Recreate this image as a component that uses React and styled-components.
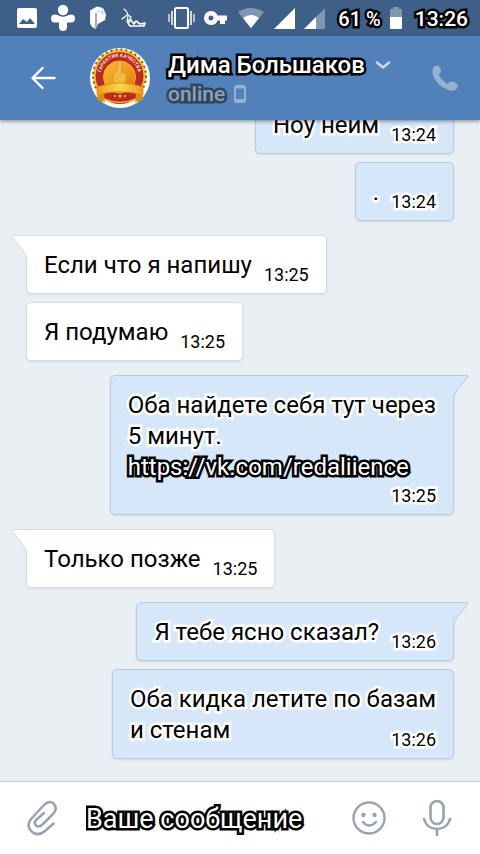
import React from "react";
import styled, { createGlobalStyle, css } from "styled-components";

const GlobalStyle = createGlobalStyle`
  * { box-sizing: border-box; }
  body { margin: 0; font-family: Roboto, "Noto Sans", sans-serif; }
  button { border: 0; padding: 0; background: none; font: inherit; cursor: pointer; }
  svg { display: block; flex: none; }
`;

const outline = css`
  paint-order: stroke fill;
  stroke-linejoin: round;
  -webkit-text-stroke: 5px ${(p) => p.$outline || "#000"};
`;

const Screen = styled.div`
  display: flex;
  flex-direction: column;
  height: 100vh;
  background: #eaeff3;
  overflow: hidden;
`;

const StatusBar = styled.div`
  display: flex;
  align-items: center;
  justify-content: space-between;
  height: 36px;
  flex: none;
  padding: 0 12px 0 17px;
  background: #3e5f87;
  color: #fff;
`;

const StatusGroup = styled.div`
  display: flex;
  align-items: center;
  gap: ${(p) => p.$gap}px;
`;

const StatusText = styled.span`
  ${outline}
  font-size: ${(p) => p.$size}px;
  font-weight: 500;
  line-height: 24px;
  padding-left: 4px;
  padding-top: 2px;
  white-space: nowrap;
`;

const Header = styled.header`
  position: relative;
  display: flex;
  align-items: center;
  height: 84px;
  flex: none;
  padding: 0 22px 0 30px;
  background: #5181b8;
  box-shadow: 0 1px 4px rgba(40, 55, 75, 0.6);
  z-index: 1;
`;

const Peer = styled.button`
  flex: 1;
  display: flex;
  align-items: center;
  gap: 18px;
  margin-left: 34px;
  text-align: left;
`;

const PeerInfo = styled.span`
  display: flex;
  flex-direction: column;
  padding-top: 2px;
`;

const PeerLine = styled.span`
  display: flex;
  align-items: center;
  gap: ${(p) => p.$gap}px;
`;

const PeerName = styled.span`
  ${outline}
  color: #fff;
  font-size: 24px;
  font-weight: 500;
  line-height: 30px;
  white-space: nowrap;
`;

const PeerStatus = styled.span`
  ${outline}
  color: #8fa1b6;
  font-size: 21px;
  font-weight: 500;
  line-height: 28px;
`;

const IconButton = styled.button`
  display: flex;
  align-items: center;
  justify-content: center;
  color: ${(p) => p.$color};
`;

const Messages = styled.main`
  flex: 1;
  min-height: 0;
  display: flex;
  flex-direction: column;
  justify-content: flex-end;
  gap: 8px;
  padding: 0 26px 22px;
  overflow: hidden;
`;

const Bubble = styled.article`
  position: relative;
  flex: none;
  align-self: ${(p) => (p.$out ? "flex-end" : "flex-start")};
  margin-top: ${(p) => (p.$first ? 6 : 0)}px;
  padding: 14px 17px 12px;
  color: #000;
  background: ${(p) => (p.$out ? "#d6e7f9" : "#fff")};
  border: 1px solid ${(p) => (p.$out ? "#b7cae4" : "#d5dbe2")};
  border-radius: 5px;
  box-shadow: 0 1px 2px rgba(60, 80, 110, 0.12);
`;

const tailSide = {
  in: css`left: -16px;`,
  out: css`right: -16px; transform: scaleX(-1);`,
};

const Tail = styled.svg`
  position: absolute;
  top: -1px;
  ${(p) => tailSide[p.$side]}
`;

const Line = styled.div`
  ${(p) => p.$out && outline}
  font-size: 24px;
  line-height: 31px;
  white-space: nowrap;
`;

const LastLine = styled.div`
  display: flex;
  justify-content: space-between;
  align-items: flex-end;
  gap: 12px;
`;

const MessageLink = styled.a`
  ${outline}
  color: #fff;
  text-decoration: none;
`;

const Time = styled.time`
  ${(p) => p.$out && outline}
  margin: 0 0 -6px auto;
  font-size: 18px;
  line-height: 25px;
`;

const Composer = styled.form`
  display: flex;
  align-items: center;
  height: 73px;
  flex: none;
  padding: 0 28px 0 26px;
  background: #fff;
  border-top: 1px solid #c9ced4;
`;

const MessageInput = styled.input`
  flex: 1;
  min-width: 0;
  height: 44px;
  margin-left: 20px;
  padding: 2px 8px 0;
  border: 0;
  outline: 0;
  background: none;
  font-family: inherit;
  font-size: 27px;
  color: #000;
  &::placeholder {
    ${outline}
    color: #fff;
    opacity: 1;
  }
`;

const ComposerActions = styled.div`
  display: flex;
  align-items: center;
  gap: 36px;
`;

const messages = [
  { out: true, lines: ["Ноу нейм"], time: "13:24" },
  { out: true, lines: ["."], time: "13:24" },
  { first: true, lines: ["Если что я напишу"], time: "13:25" },
  { lines: ["Я подумаю"], time: "13:25" },
  {
    out: true,
    first: true,
    lines: ["Оба найдете себя тут через", "5 минут."],
    link: "https://vk.com/redaliience",
    time: "13:25",
  },
  { first: true, lines: ["Только позже"], time: "13:25" },
  { out: true, first: true, lines: ["Я тебе ясно сказал?"], time: "13:26" },
  { out: true, lines: ["Оба кидка летите по базам", "и стенам"], time: "13:26" },
];

function Message({ out, first, lines, link, time }) {
  const body = link ? lines : lines.slice(0, -1);
  const last = link ? null : lines[lines.length - 1];
  const halo = out ? { $out: true, $outline: "#fff" } : {};
  return (
    <Bubble $out={out} $first={first}>
      {first && (
        <Tail $side={out ? "out" : "in"} width="20" height="26" viewBox="0 0 20 26" aria-hidden="true">
          <path d="M20 .5H1.5q-1 0-.4 1L13 17q2.5 3 2.5 7v2H20z" fill={out ? "#d6e7f9" : "#fff"} />
          <path d="M20 .5H1.5q-1 0-.4 1L13 17q2.5 3 2.5 7v2" fill="none" stroke={out ? "#b7cae4" : "#d5dbe2"} />
        </Tail>
      )}
      {body.map((text) => (
        <Line key={text} {...halo}>{text}</Line>
      ))}
      {link && (
        <Line>
          <MessageLink href={link}>{link}</MessageLink>
        </Line>
      )}
      <LastLine>
        {last && <Line {...halo}>{last}</Line>}
        <Time {...halo}>{time}</Time>
      </LastLine>
    </Bubble>
  );
}

const ImageIcon = () => (
  <svg width="20" height="20" viewBox="0 0 20 20">
    <path fillRule="evenodd" fill="#fff" d="M2 0h16q2 0 2 2v16q0 2-2 2H2q-2 0-2-2V2q0-2 2-2zm0 16h16l-5-6-3 4-4-3z" />
  </svg>
);

const PersonPlusIcon = () => (
  <svg width="24" height="28" viewBox="0 0 24 28" fill="#fff">
    <circle cx="12" cy="6" r="5.2" />
    <path d="M4 10.500q2.500 0 4.500 1.500 3.500 1.500 7 0 2-1.500 4.500-1.500a4 4 0 0 1 0 8h-4V23a4 4 0 0 1-8 0v-4.500H4a4 4 0 0 1 0-8z" />
  </svg>
);

const LetterBadgeIcon = () => (
  <svg width="18" height="24" viewBox="0 0 18 24">
    <path d="M1 4.500 8 .5l6 1.500 3 6-1 6-7 4-2 5-4-2-2-4z" fill="#fff" />
    <path d="M7 7v15" stroke="#3e5f87" strokeWidth="1" fill="none" />
    <path d="M8 5q5 0 6 4M14 2l-1 4 4 2" stroke="#b9c7d8" strokeWidth="1" fill="none" />
  </svg>
);

const SketchIcon = () => (
  <svg width="26" height="20" viewBox="0 0 26 20" fill="none" stroke="#fff" strokeLinecap="round" strokeLinejoin="round">
    <path d="M3 1q3 2 4 6l3 2M6 7l-5 4M7 8l-1 6 4-4" strokeWidth="1.200" />
    <path d="M7 15l3-3 3 4 2-3 4 3 5-1-1 3H9z" strokeWidth="1.600" />
  </svg>
);

const VibrateIcon = () => (
  <svg width="27" height="22" viewBox="0 0 27 22" fill="none" stroke="#fff">
    <rect x="7" y="1" width="13" height="20" rx="1.500" strokeWidth="2" />
    <path d="M4 4v14M23 4v14" strokeWidth="1.500" />
    <path d="M1 7v8M26 7v8" strokeWidth="1.500" opacity=".8" />
  </svg>
);

const KeyIcon = () => (
  <svg width="24" height="14" viewBox="0 0 24 14">
    <path fillRule="evenodd" fill="#fff" d="M7 0q5 0 6.500 4.500H23v5h-2V13h-5V9.500h-2.500Q12 14 7 14A7 7 0 0 1 7 0zm0 4.500a2.500 2.500 0 1 0 0 5 2.500 2.500 0 0 0 0-5z" />
  </svg>
);

const WifiIcon = () => (
  <svg width="28" height="20" viewBox="0 0 28 20" fill="#fff">
    <path d="M14 20 1 4q13-8 26 0z" opacity=".35" />
    <path d="M14 20 6 10q8-6 16 0z" />
  </svg>
);

const SignalIcon = ({ partial }) => (
  <svg width="21" height="21" viewBox="0 0 21 21" fill="#fff">
    <path d="M0 21 21 0v21z" opacity={partial ? 0.35 : 1} />
    {partial && <path d="M0 21 12 9v12z" />}
  </svg>
);

const BatteryIcon = () => (
  <svg width="12" height="22" viewBox="0 0 12 22" fill="#fff">
    <path d="M3 0h6v2h3v8H0V2h3z" opacity=".35" />
    <path d="M0 10h12v11q0 1-1 1H1q-1 0-1-1z" />
  </svg>
);

const BackIcon = () => (
  <svg width="26" height="24" viewBox="0 0 26 24" fill="none" stroke="currentColor" strokeWidth="2.400" strokeLinecap="round" strokeLinejoin="round">
    <path d="M12.500 2 2.500 12l10 10M3 12h21.500" />
  </svg>
);

const ChevronIcon = () => (
  <svg width="16" height="10" viewBox="0 0 16 10" fill="none" stroke="#cbd9e9" strokeWidth="2.500" strokeLinecap="round" strokeLinejoin="round">
    <path d="m2 2.500 6 5 6-5" />
  </svg>
);

const DeviceIcon = () => (
  <svg width="12" height="18" viewBox="0 0 12 18" fill="none" stroke="#97b3d4">
    <rect x="1" y="1" width="10" height="16" rx="2" strokeWidth="2" />
    <path d="M2 15.500h8M2 2h8" strokeWidth="3" />
  </svg>
);

const PhoneIcon = () => (
  <svg width="26" height="26" viewBox="0 0 26 26" fill="currentColor">
    <path d="M1.500 2Q4 0 6 .5q3 2 3 6Q9 8 6.500 9.500q3 6 9 9.500 1.500-2.500 3.500-2.500 4 0 6.500 3 .5 3-1.500 5-3 2-8 .5Q4 20 .5 9q-.5-5 1-7z" />
  </svg>
);

const ClipIcon = () => (
  <svg width="32" height="36" viewBox="0 0 32 36" fill="none" stroke="currentColor" strokeWidth="2.500" strokeLinecap="round" strokeLinejoin="round">
    <path d="M27.500 23.500 19 31q-7 6-13.500.5-6-6.500 0-13L18 5q5-5 9.500-1.500 4.500 5 0 10L16.500 24.500q-4 3.500-6.500 1-2.500-3 .5-6L18 13" />
  </svg>
);

const SmileIcon = () => (
  <svg width="34" height="34" viewBox="0 0 34 34" fill="none" stroke="currentColor" strokeWidth="2.400" strokeLinecap="round">
    <circle cx="17" cy="17" r="15.500" />
    <circle cx="11.500" cy="14" r="2.200" fill="currentColor" stroke="none" />
    <circle cx="22.500" cy="14" r="2.200" fill="currentColor" stroke="none" />
    <path d="M11 21q6 7 13 0" />
  </svg>
);

const MicIcon = () => (
  <svg width="30" height="38" viewBox="0 0 30 38" fill="none" stroke="currentColor" strokeWidth="2.600" strokeLinecap="round">
    <rect x="8.500" y="2" width="13" height="23" rx="6.500" />
    <path d="M2 20q3 10 13 10t13-10M15 30v6" />
  </svg>
);

const Avatar = () => (
  <svg width="60" height="60" viewBox="0 0 60 60" role="img" aria-label="Гарантия качества">
    <defs>
      <linearGradient id="ribbon" x1="0" y1="0" x2="1" y2="0">
        <stop offset="0" stopColor="#ee9a1c" />
        <stop offset=".5" stopColor="#fbd850" />
        <stop offset="1" stopColor="#ee9a1c" />
      </linearGradient>
      <linearGradient id="medal" x1="0" y1="0" x2="1" y2="1">
        <stop offset="0" stopColor="#fbb93b" />
        <stop offset=".6" stopColor="#f09418" />
        <stop offset="1" stopColor="#d96f10" />
      </linearGradient>
      <path id="arc" d="M10.500 28a19 19 0 0 1 38 0" />
    </defs>
    <circle cx="30" cy="30" r="30" fill="#fffdf4" />
    <circle cx="29.500" cy="28" r="26.500" fill="#f4c33d" stroke="#8a5a20" strokeWidth="2" strokeDasharray="2 3" />
    <circle cx="29.500" cy="28" r="24" fill="#bd2a1f" />
    <circle cx="29.500" cy="29" r="16" fill="url(#medal)" stroke="#f9b62c" strokeWidth="1" />
    <text fill="#f8ded2" fontSize="5" fontWeight="700" textAnchor="middle">
      <textPath href="#arc" startOffset="50%">ГАРАНТИЯ КАЧЕСТВА</textPath>
    </text>
    <path d="M23 27q4-3 4-9 0-5 3-5 3 1 2 7l-1 5h4q2 1 1 3 1 2 0 3 0 2-1 3 0 2-2 3h-8l-2-2z" fill="#f2b840" stroke="#c99a2c" strokeWidth=".8" />
    <path d="M10 42q20 16 40 0l-4 9q-16 10-32 0z" fill="#bd2a1f" />
    <path d="m8 43-1 9 8 2-1-8M52 43l1 9-8 2 1-8" fill="#dc8d12" />
    <path d="M7 39q23-8 46 0v8q-23-7-46 0z" fill="url(#ribbon)" stroke="#da8a14" strokeWidth=".8" />
    <g fill="#f5c640">
      <circle cx="25" cy="48" r="1" />
      <circle cx="30" cy="48" r="1.500" />
      <circle cx="35" cy="48" r="1" />
    </g>
    <path d="M14 51q16 7 32 0" fill="none" stroke="#f0b52d" strokeWidth="1.500" />
  </svg>
);

export default function App() {
  return (
    <Screen>
      <GlobalStyle />
      <StatusBar>
        <StatusGroup $gap={14}>
          <ImageIcon />
          <PersonPlusIcon />
          <LetterBadgeIcon />
          <SketchIcon />
        </StatusGroup>
        <StatusGroup $gap={9}>
          <VibrateIcon />
          <KeyIcon />
          <WifiIcon />
          <SignalIcon />
          <SignalIcon partial />
          <StatusText $size={20}>61 %</StatusText>
          <BatteryIcon />
          <StatusText $size={21}>13:26</StatusText>
        </StatusGroup>
      </StatusBar>
      <Header>
        <IconButton $color="#fff" aria-label="Назад"><BackIcon /></IconButton>
        <Peer>
          <Avatar />
          <PeerInfo>
            <PeerLine $gap={10}>
              <PeerName>Дима Большаков</PeerName>
              <ChevronIcon />
            </PeerLine>
            <PeerLine $gap={9}>
              <PeerStatus $outline="#30465f">online</PeerStatus>
              <DeviceIcon />
            </PeerLine>
          </PeerInfo>
        </Peer>
        <IconButton $color="#97b3d4" aria-label="Позвонить"><PhoneIcon /></IconButton>
      </Header>
      <Messages>
        {messages.map((m, i) => (
          <Message key={i} {...m} />
        ))}
      </Messages>
      <Composer onSubmit={(e) => e.preventDefault()}>
        <IconButton type="button" $color="#99a2ad" aria-label="Прикрепить"><ClipIcon /></IconButton>
        <MessageInput placeholder="Ваше сообщение" aria-label="Ваше сообщение" />
        <ComposerActions>
          <IconButton type="button" $color="#99a2ad" aria-label="Смайлы"><SmileIcon /></IconButton>
          <IconButton type="button" $color="#99a2ad" aria-label="Голосовое сообщение"><MicIcon /></IconButton>
        </ComposerActions>
      </Composer>
    </Screen>
  );
}
